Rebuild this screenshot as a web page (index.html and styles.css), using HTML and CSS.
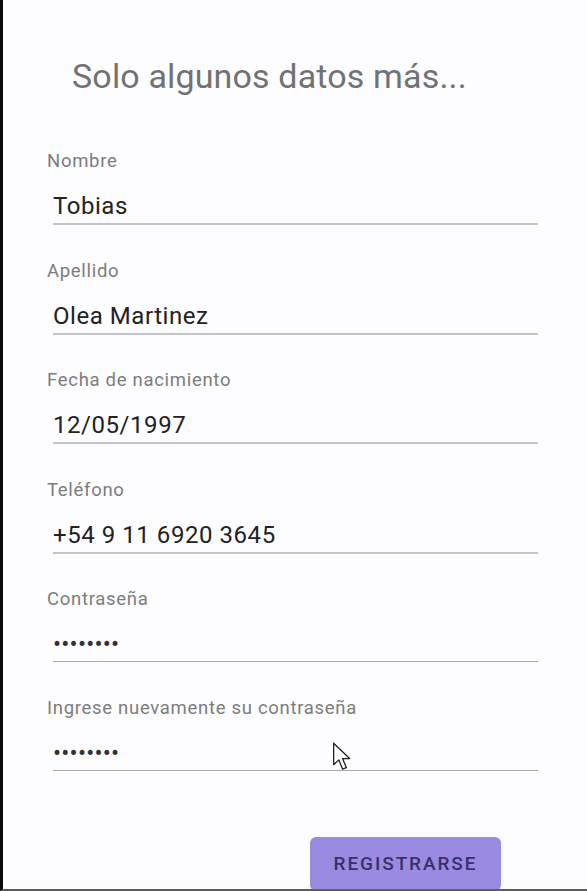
FILE: index.html
```html
<!DOCTYPE html>
<html lang="es">
<head>
<meta charset="utf-8">
<title>Registro</title>
<link rel="stylesheet" href="styles.css">
</head>
<body>
<div class="screen">
  <h1 class="title">Solo algunos datos más...</h1>
  <form class="form">
    <div class="field">
      <label class="label">Nombre</label>
      <div class="value">Tobias</div>
    </div>
    <div class="field">
      <label class="label">Apellido</label>
      <div class="value">Olea Martinez</div>
    </div>
    <div class="field">
      <label class="label">Fecha de nacimiento</label>
      <div class="value">12/05/1997</div>
    </div>
    <div class="field">
      <label class="label">Teléfono</label>
      <div class="value">+54 9 11 6920 3645</div>
    </div>
    <div class="field">
      <label class="label">Contraseña</label>
      <div class="value password">••••••••</div>
    </div>
    <div class="field">
      <label class="label">Ingrese nuevamente su contraseña</label>
      <div class="value password">••••••••</div>
    </div>
    <div class="actions">
      <button type="button" class="btn">REGISTRARSE</button>
    </div>
  </form>
  <svg class="cursor" width="22" height="32" viewBox="0 0 20 28">
    <path d="M1.5 1.5 L1.5 21 L6.2 16.6 L9.6 25 L13 23.6 L9.6 15.4 L16 15.4 Z" fill="#ffffff" stroke="#222" stroke-width="1.2" stroke-linejoin="round"/>
  </svg>
</div>
</body>
</html>
```

FILE: styles.css
```css
* { box-sizing: border-box; }
html, body {
  margin: 0;
  padding: 0;
  background: #fdfcff;
}
body {
  font-family: Roboto, "Noto Sans", "Liberation Sans", sans-serif;
  width: 587px;
  height: 891px;
  overflow: hidden;
}
.screen {
  position: relative;
  width: 587px;
  height: 891px;
  border-left: 3px solid #0a0a0a;
  border-bottom: 2px solid #5c5c5c;
  padding-left: 44px;
  padding-top: 56px;
  display: flex;
  flex-direction: column;
  overflow: hidden;
}
.title {
  margin: 0 0 0 25px;
  font-weight: 400;
  font-size: 34px;
  line-height: 40px;
  color: #727272;
  letter-spacing: 0.15px;
}
.form {
  margin-top: 55px;
  display: flex;
  flex-direction: column;
  gap: 35.5px;
}
.field {
  display: flex;
  flex-direction: column;
}
.label {
  font-size: 18.5px;
  line-height: 20px;
  color: #7c7c7c;
  letter-spacing: 0.7px;
}
.value {
  margin: 20px 0 0 6px;
  width: 485px;
  font-size: 24px;
  line-height: 28px;
  padding-top: 1px;
  padding-bottom: 3px;
  color: #222;
  border-bottom: 2px solid #c3c3ca;
  letter-spacing: 0.55px;
}
.value.password {
  color: #333;
  border-bottom: 1.5px solid #a8a8ac;
  letter-spacing: 0.2px;
}
.actions {
  display: flex;
  margin-top: 31px;
  padding-left: 263px;
}
.btn {
  width: 191px;
  height: 54px;
  border: none;
  border-radius: 6px;
  background: #9b8ae1;
  color: #3a2f6c;
  font-family: Roboto, "Noto Sans", sans-serif;
  font-weight: 500;
  font-size: 19px;
  letter-spacing: 1.9px;
  padding: 0 0 2px 0;
}
.cursor {
  position: absolute;
  left: 329px;
  top: 741px;
}
```
